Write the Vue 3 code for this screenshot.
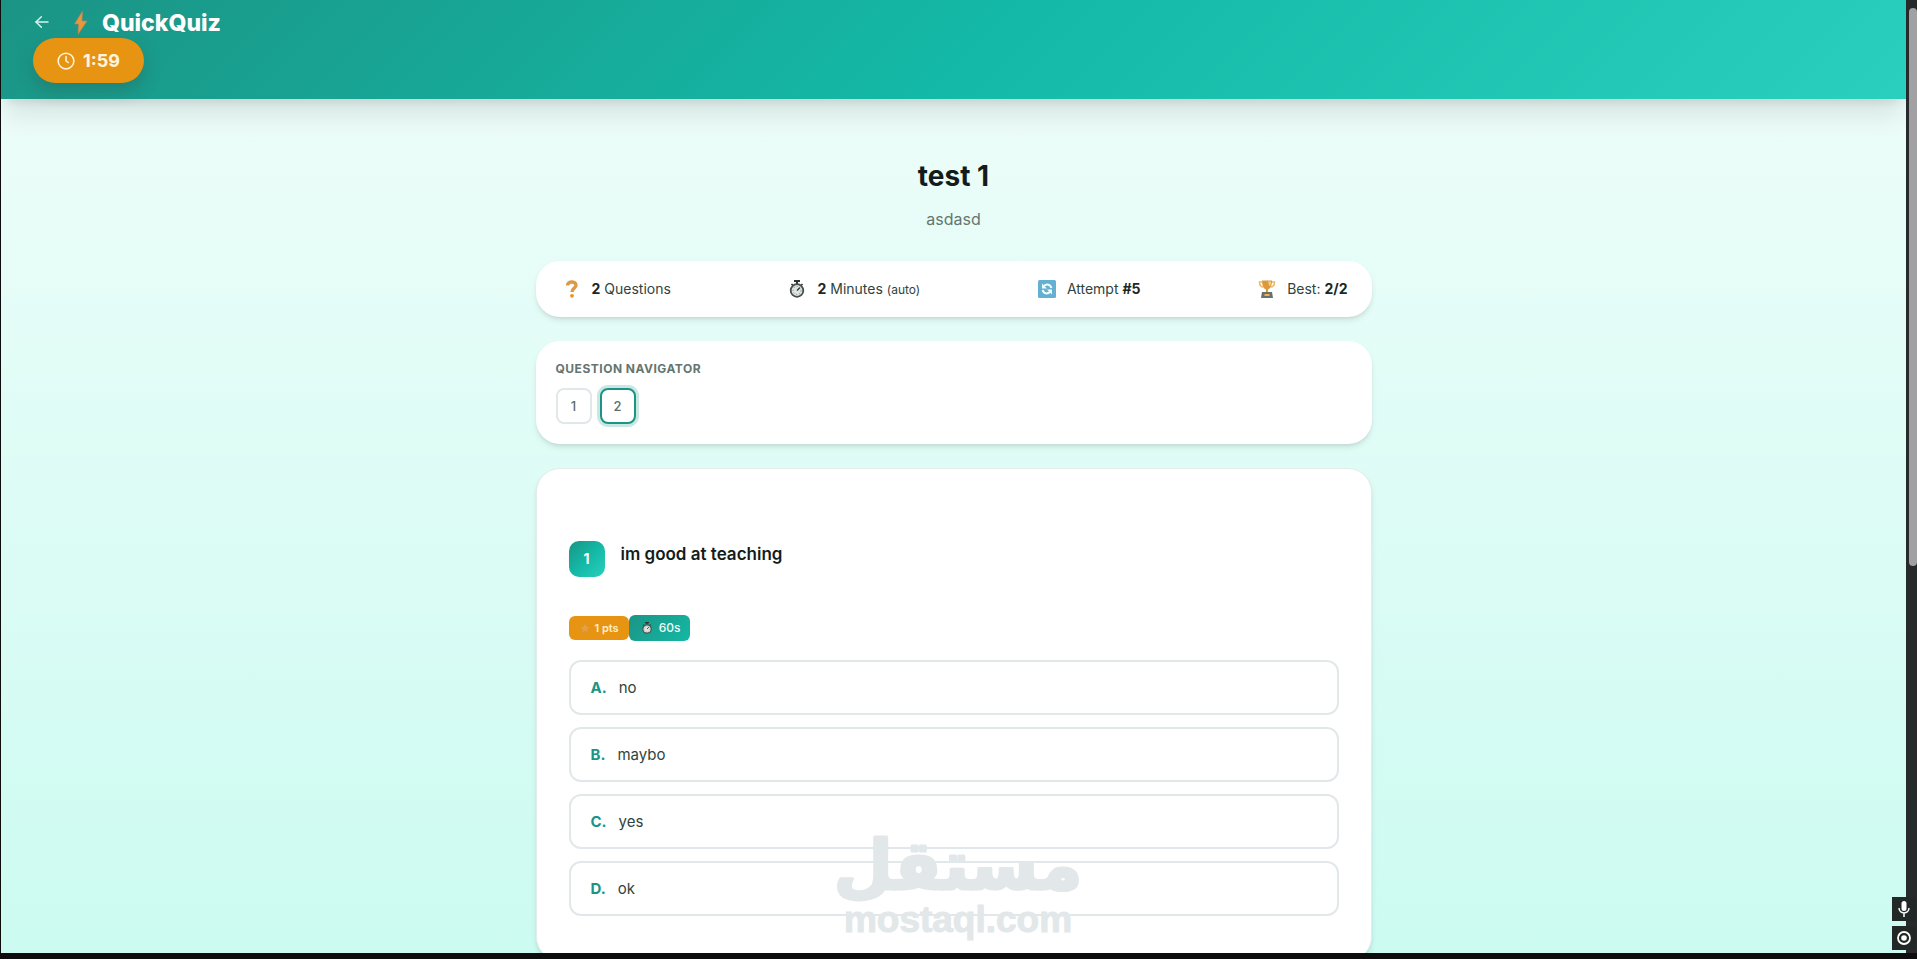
<template>
  <div class="window">
    <div class="viewport">
      <header class="app-header">
        <div class="brand-row">
          <a href="#" class="back-link" aria-label="Back">
            <svg width="16" height="16" viewBox="0 0 24 24" fill="none" stroke="currentColor" stroke-width="2.2" stroke-linecap="round" stroke-linejoin="round" aria-hidden="true">
              <path d="M21 12H3" />
              <path d="M11 4l-8 8 8 8" />
            </svg>
          </a>
          <svg class="bolt" width="14" height="24" viewBox="0 0 14 24" aria-hidden="true">
            <path d="M8.500 0L0.500 13h4L4 23.500L13 10H8z" fill="#e8983a" stroke="#b9805c" stroke-width="0.600" />
          </svg>
          <span class="brand">QuickQuiz</span>
        </div>
        <div class="timer" role="timer">
          <svg width="18" height="18" viewBox="0 0 24 24" fill="none" stroke="currentColor" stroke-width="2" stroke-linecap="round" stroke-linejoin="round" aria-hidden="true">
            <circle cx="12" cy="12" r="10.500" />
            <path d="M12 6v6l3 2" />
          </svg>
          <span>1:59</span>
        </div>
      </header>

      <main class="quiz">
        <h1>test 1</h1>
        <p class="description">asdasd</p>

        <section class="card stats">
          <div class="stat">
            <span class="stat-icon">
              <svg width="14" height="18" viewBox="0 0 14 18" fill="none" aria-hidden="true">
                <path d="M2.500 5.500C2.500 0.800 11 0.800 11 5.200C11 8.300 7 8 7 12" stroke="#dc9a45" stroke-width="3.400" />
                <circle cx="7" cy="15.800" r="1.900" fill="#e8951c" />
              </svg>
            </span>
            <span><strong>2</strong> Questions</span>
          </div>
          <div class="stat">
            <span class="stat-icon"><StopwatchIcon :size="18" /></span>
            <span><strong>2</strong> Minutes <small>(auto)</small></span>
          </div>
          <div class="stat">
            <span class="stat-icon">
              <svg width="18" height="18" viewBox="0 0 18 18" fill="none" aria-hidden="true">
                <rect width="18" height="18" rx="1.500" fill="#64b0d4" />
                <path d="M13.300 8C12.500 4.300 8.500 3.600 6 6M4.700 10C5.500 13.700 9.500 14.400 12 12" stroke="#f2fffc" stroke-width="2" />
                <path d="M4 3.500V8.500H9zM14 14.500V9.500H9z" fill="#f2fffc" />
              </svg>
            </span>
            <span>Attempt <strong>#5</strong></span>
          </div>
          <div class="stat">
            <span class="stat-icon">
              <svg width="18" height="18" viewBox="0 0 18 18" fill="none" aria-hidden="true">
                <path d="M4 2H1.500C1.500 5 3 7 5.500 7M13 2h3.500C16.500 5 15 7 12.500 7" stroke="#efb765" stroke-width="1.500" />
                <path d="M4 0.500h10c0 5-1.500 8-4 9v3.500H8V9.500C5.500 8.500 4 5.500 4 0.500z" fill="#dc993d" />
                <path d="M10 1.500h3c0 2-0.500 4-1.500 5z" fill="#f4cf83" />
                <path d="M4 12h10l1 6H3z" fill="#6a706d" />
                <path d="M6.500 14h5v2h-5z" fill="#efb04d" />
              </svg>
            </span>
            <span>Best: <strong>2/2</strong></span>
          </div>
        </section>

        <nav class="card navigator" aria-labelledby="navigator-title">
          <h2 id="navigator-title">QUESTION NAVIGATOR</h2>
          <div class="nav-buttons">
            <button
              v-for="n in 2"
              :key="n"
              type="button"
              :class="{ current: n === current }"
              @click="current = n"
            >{{ n }}</button>
          </div>
        </nav>

        <section class="card question">
          <div class="question-head">
            <span class="number">1</span>
            <h3>im good at teaching</h3>
          </div>
          <div class="badges">
            <span class="badge points">
              <svg width="12" height="12" viewBox="0 0 12 12" aria-hidden="true">
                <path d="M6 1l1.500 3.300L11 4.700L8.500 7.100L9.200 10.800L6 9L2.800 10.800L3.500 7.100L1 4.700L4.500 4.300z" fill="#e8a03c" stroke="#c98a5c" stroke-width="0.800" stroke-dasharray="1 1" />
              </svg>
              1 pts
            </span>
            <span class="badge seconds"><StopwatchIcon :size="12" /> 60s</span>
          </div>
          <div class="options">
            <button
              v-for="option in options"
              :key="option.letter"
              type="button"
              class="option"
              :aria-pressed="selected === option.letter"
              @click="selected = option.letter"
            >
              <span class="letter">{{ option.letter }}.</span>
              <span>{{ option.text }}</span>
            </button>
          </div>
        </section>
      </main>

      <svg class="watermark" width="236" height="124" viewBox="0 0 236 124" aria-hidden="true">
        <text class="mark-ar" x="118" y="60" text-anchor="middle">مستقل</text>
        <text class="mark-en" x="118" y="103" text-anchor="middle">mostaql.com</text>
      </svg>
    </div>

    <div class="scrollbar">
      <div class="thumb"></div>
    </div>

    <div class="tools">
      <button type="button" aria-label="Microphone">
        <svg width="16" height="18" viewBox="0 0 16 18" fill="none" stroke="#fff" aria-hidden="true">
          <rect x="5.500" y="1" width="5" height="10" rx="2.500" fill="#fff" stroke="none" />
          <path d="M3 8c0 6.500 10 6.500 10 0M8 13v4" stroke-width="1.500" />
        </svg>
      </button>
      <button type="button" aria-label="Record">
        <svg width="16" height="16" viewBox="0 0 16 16" fill="none" aria-hidden="true">
          <circle cx="8" cy="8" r="6" stroke="#fff" stroke-width="1.800" />
          <circle cx="8" cy="8" r="2.800" fill="#fff" />
        </svg>
      </button>
    </div>
  </div>
</template>

<script setup>
import { h, ref } from 'vue'

const current = ref(2)
const selected = ref(null)

const options = [
  { letter: 'A', text: 'no' },
  { letter: 'B', text: 'maybo' },
  { letter: 'C', text: 'yes' },
  { letter: 'D', text: 'ok' },
]

const StopwatchIcon = ({ size }) =>
  h('svg', { width: size, height: size, viewBox: '0 0 18 18', fill: 'none', 'aria-hidden': 'true' }, [
    h('path', { d: 'M6 0h6v2H6zM8 2h2v2H8z', fill: '#2b3532' }),
    h('path', { d: 'M3.500 4l1.500 1.500M14.500 4l-1.500 1.500', stroke: '#2b3532', 'stroke-width': 1.6 }),
    h('circle', { cx: 9, cy: 10.5, r: 6.3, fill: '#dfe4e2', stroke: '#46504d', 'stroke-width': 1.8 }),
    h('path', { d: 'M9 10.500l3-3', stroke: '#2b3532', 'stroke-width': 1.2 }),
    h('circle', { cx: 9, cy: 10.5, r: 4, stroke: '#77817e', 'stroke-width': 1, 'stroke-dasharray': '1 2' }),
  ])
</script>

<style>
body {
  margin: 0;
  background: #0d0d0d;
}
</style>

<style scoped>
.window {
  position: relative;
  display: flex;
  box-sizing: border-box;
  height: 100vh;
  border-left: 1px solid #0d0d0d;
  border-bottom: 6px solid #0d0d0d;
  font-family: Inter, "Noto Sans", sans-serif;
  color: #2f4440;
}

.viewport {
  position: relative;
  flex: 1;
  overflow: hidden;
  background: linear-gradient(180deg, #f0fdfa 0%, #ccfbf1 100%);
}

button {
  font-family: inherit;
  cursor: pointer;
}

.app-header {
  padding: 8px 32px 16px;
  background: linear-gradient(135deg, #1b9485 0%, #14b8a6 50%, #2ad0bd 100%);
  box-shadow: 0 20px 25px -5px rgba(0, 0, 0, 0.1), 0 8px 10px -6px rgba(0, 0, 0, 0.1);
}

.brand-row {
  display: flex;
  align-items: center;
  height: 30px;
  color: #fff;
}

.back-link {
  display: flex;
  margin: 0 24px 0 1px;
  padding-bottom: 2px;
  color: #d5f5ef;
}

.bolt {
  margin-right: 14px;
}

.brand {
  font-size: 23px;
  font-weight: 800;
  line-height: 30px;
}

.timer {
  display: inline-flex;
  align-items: center;
  gap: 8px;
  padding: 0 24px;
  border-radius: 24px;
  background: #e89413;
  box-shadow: 0 8px 16px rgba(40, 90, 80, 0.35);
  color: #fff6e0;
  font-size: 18px;
  font-weight: 700;
  line-height: 45px;
  vertical-align: top;
}

.quiz {
  max-width: 836px;
  margin: 0 auto;
  padding: 56px 32px 0;
}

h1 {
  margin: 0 0 12px;
  color: #131c1a;
  font-size: 28px;
  font-weight: 700;
  line-height: 42px;
  text-align: center;
}

.description {
  margin: 0 0 32px;
  color: #64756f;
  font-size: 16px;
  line-height: 20px;
  text-align: center;
}

.card {
  box-sizing: border-box;
  margin-bottom: 24px;
  border-radius: 24px;
  background: #fff;
  box-shadow: 0 4px 6px -1px rgba(0, 0, 0, 0.1), 0 2px 4px -2px rgba(0, 0, 0, 0.1);
}

.stats {
  display: flex;
  justify-content: space-between;
  padding: 16px 24px;
  font-size: 14px;
  line-height: 24px;
}

.stat {
  display: flex;
  align-items: center;
  gap: 8px;
}

.stat strong {
  color: #1a2826;
  font-weight: 700;
}

.stat small {
  font-size: 12px;
  line-height: 1;
}

.stat-icon {
  display: flex;
  justify-content: center;
  width: 24px;
}

.navigator {
  padding: 20px;
}

.navigator h2 {
  margin: 0 0 11px;
  color: #64756f;
  font-size: 12px;
  font-weight: 700;
  letter-spacing: 0.5px;
  line-height: 16px;
}

.nav-buttons {
  display: flex;
  gap: 8px;
}

.nav-buttons button {
  width: 36px;
  height: 36px;
  padding: 0;
  border: 2px solid #e2e8ea;
  border-radius: 8px;
  background: #fff;
  color: #5d6e69;
  font-size: 13px;
  font-weight: 500;
}

.nav-buttons .current {
  border-color: #1b9485;
  box-shadow: 0 0 0 3px #c9e8e2;
}

.question {
  padding: 72px 32px 44px;
  border: 1px solid #e5edeb;
}

.question-head {
  display: flex;
  gap: 16px;
  margin-bottom: 38px;
}

.number {
  width: 36px;
  border-radius: 10px;
  background: linear-gradient(135deg, #1b9485 0%, #14b8a6 50%, #2ad0bd 100%);
  color: #fff;
  font-size: 14px;
  font-weight: 700;
  line-height: 36px;
  text-align: center;
}

h3 {
  margin: 0;
  color: #131c1a;
  font-size: 17px;
  font-weight: 600;
  line-height: 26px;
}

.badges {
  display: flex;
  align-items: center;
  margin-bottom: 19px;
}

.badge {
  display: flex;
  align-items: center;
  gap: 4px;
  padding: 0 10px;
  border-radius: 6px;
  font-size: 12px;
  font-weight: 600;
  line-height: 24px;
}

.points {
  background: #e89413;
  color: #ffefc9;
  font-size: 11px;
}

.seconds {
  gap: 6px;
  padding-left: 12px;
  background: linear-gradient(135deg, #1b9485, #14b8a6);
  color: #e9fffa;
  font-weight: 500;
  line-height: 26px;
}

.options {
  display: grid;
  gap: 12px;
}

.option {
  display: flex;
  align-items: center;
  gap: 12px;
  height: 55px;
  padding: 0 20px;
  border: 2px solid #e2e8ea;
  border-radius: 12px;
  background: #fff;
  color: #2f4440;
  font-size: 15px;
  text-align: left;
}

.letter {
  color: #1b9485;
  font-weight: 700;
}

.watermark {
  position: absolute;
  left: 50%;
  bottom: 0;
  margin-left: 4px;
  overflow: visible;
  transform: translateX(-50%);
  pointer-events: none;
}

.watermark text {
  fill: #e2e7e9;
  stroke: #e2e7e9;
  stroke-linejoin: round;
}

.mark-ar {
  font-family: "DejaVu Sans", sans-serif;
  font-size: 68px;
  font-weight: 700;
  stroke-width: 3px;
}

.mark-en {
  font-family: "Liberation Sans", sans-serif;
  font-size: 37px;
  font-weight: 700;
  stroke-width: 1px;
}

.scrollbar {
  width: 11px;
  box-sizing: border-box;
  padding: 8px 0 0 3px;
  background: #262a2b;
}

.thumb {
  height: 59%;
  border-radius: 4px;
  background: #a1a1a3;
}

.tools {
  position: absolute;
  right: 1px;
  bottom: 3px;
  display: grid;
  gap: 5px;
}

.tools button {
  display: flex;
  align-items: center;
  justify-content: center;
  width: 24px;
  height: 24px;
  padding: 0;
  border: 0;
  background: #222826;
}
</style>
